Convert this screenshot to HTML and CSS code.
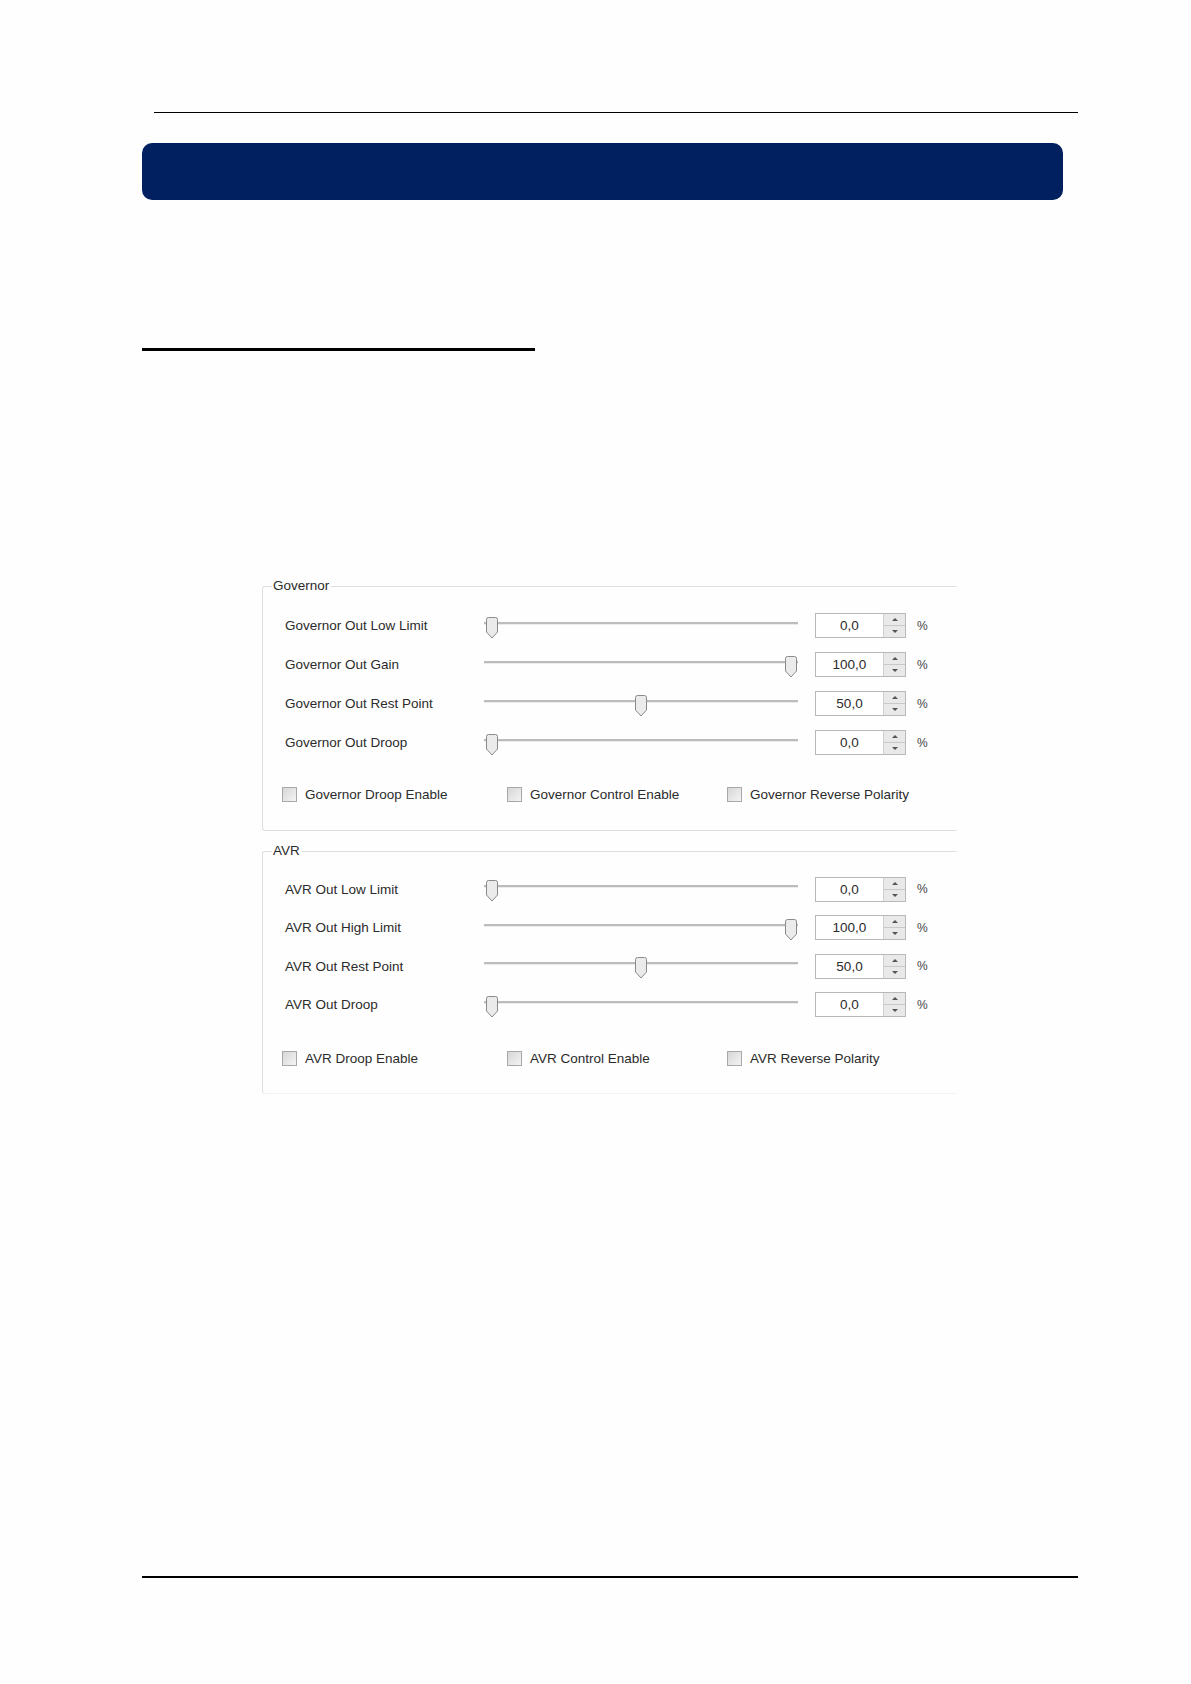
FILE: index.html
```html
<!DOCTYPE html>
<html>
<head>
<meta charset="utf-8">
<title>Governor / AVR</title>
<link rel="stylesheet" href="styles.css">
</head>
<body>
<div class="page">
  <div class="top-rule"></div>
  <div class="title-bar"></div>
  <div class="section-rule"></div>

  <div class="groups">
    <div class="group group-gov">
      <span class="legend">Governor</span>
      <div class="rows rows-gov">
        <div class="row">
          <span class="label">Governor Out Low Limit</span>
          <div class="slider"><div class="track"></div><svg class="thumb" style="left:1px" viewBox="0 0 14 22" width="14" height="22"><path d="M1.5 2.5 Q1.5 0.5 3.5 0.5 H10.5 Q12.5 0.5 12.5 2.5 V15 L7 21 L1.5 15 Z"/></svg></div>
          <div class="spin"><span class="val">0,0</span><span class="arrows"><span class="up"></span><span class="down"></span></span></div>
          <span class="pct">%</span>
        </div>
        <div class="row">
          <span class="label">Governor Out Gain</span>
          <div class="slider"><div class="track"></div><svg class="thumb" style="left:300px" viewBox="0 0 14 22" width="14" height="22"><path d="M1.5 2.5 Q1.5 0.5 3.5 0.5 H10.5 Q12.5 0.5 12.5 2.5 V15 L7 21 L1.5 15 Z"/></svg></div>
          <div class="spin"><span class="val">100,0</span><span class="arrows"><span class="up"></span><span class="down"></span></span></div>
          <span class="pct">%</span>
        </div>
        <div class="row">
          <span class="label">Governor Out Rest Point</span>
          <div class="slider"><div class="track"></div><svg class="thumb" style="left:150px" viewBox="0 0 14 22" width="14" height="22"><path d="M1.5 2.5 Q1.5 0.5 3.5 0.5 H10.5 Q12.5 0.5 12.5 2.5 V15 L7 21 L1.5 15 Z"/></svg></div>
          <div class="spin"><span class="val">50,0</span><span class="arrows"><span class="up"></span><span class="down"></span></span></div>
          <span class="pct">%</span>
        </div>
        <div class="row">
          <span class="label">Governor Out Droop</span>
          <div class="slider"><div class="track"></div><svg class="thumb" style="left:1px" viewBox="0 0 14 22" width="14" height="22"><path d="M1.5 2.5 Q1.5 0.5 3.5 0.5 H10.5 Q12.5 0.5 12.5 2.5 V15 L7 21 L1.5 15 Z"/></svg></div>
          <div class="spin"><span class="val">0,0</span><span class="arrows"><span class="up"></span><span class="down"></span></span></div>
          <span class="pct">%</span>
        </div>
      </div>
      <div class="checks checks-gov">
        <label class="check"><span class="box"></span>Governor Droop Enable</label>
        <label class="check"><span class="box"></span>Governor Control Enable</label>
        <label class="check"><span class="box"></span>Governor Reverse Polarity</label>
      </div>
    </div>

    <div class="group group-avr">
      <span class="legend">AVR</span>
      <div class="rows rows-avr">
        <div class="row">
          <span class="label">AVR Out Low Limit</span>
          <div class="slider"><div class="track"></div><svg class="thumb" style="left:1px" viewBox="0 0 14 22" width="14" height="22"><path d="M1.5 2.5 Q1.5 0.5 3.5 0.5 H10.5 Q12.5 0.5 12.5 2.5 V15 L7 21 L1.5 15 Z"/></svg></div>
          <div class="spin"><span class="val">0,0</span><span class="arrows"><span class="up"></span><span class="down"></span></span></div>
          <span class="pct">%</span>
        </div>
        <div class="row">
          <span class="label">AVR Out High Limit</span>
          <div class="slider"><div class="track"></div><svg class="thumb" style="left:300px" viewBox="0 0 14 22" width="14" height="22"><path d="M1.5 2.5 Q1.5 0.5 3.5 0.5 H10.5 Q12.5 0.5 12.5 2.5 V15 L7 21 L1.5 15 Z"/></svg></div>
          <div class="spin"><span class="val">100,0</span><span class="arrows"><span class="up"></span><span class="down"></span></span></div>
          <span class="pct">%</span>
        </div>
        <div class="row">
          <span class="label">AVR Out Rest Point</span>
          <div class="slider"><div class="track"></div><svg class="thumb" style="left:150px" viewBox="0 0 14 22" width="14" height="22"><path d="M1.5 2.5 Q1.5 0.5 3.5 0.5 H10.5 Q12.5 0.5 12.5 2.5 V15 L7 21 L1.5 15 Z"/></svg></div>
          <div class="spin"><span class="val">50,0</span><span class="arrows"><span class="up"></span><span class="down"></span></span></div>
          <span class="pct">%</span>
        </div>
        <div class="row">
          <span class="label">AVR Out Droop</span>
          <div class="slider"><div class="track"></div><svg class="thumb" style="left:1px" viewBox="0 0 14 22" width="14" height="22"><path d="M1.5 2.5 Q1.5 0.5 3.5 0.5 H10.5 Q12.5 0.5 12.5 2.5 V15 L7 21 L1.5 15 Z"/></svg></div>
          <div class="spin"><span class="val">0,0</span><span class="arrows"><span class="up"></span><span class="down"></span></span></div>
          <span class="pct">%</span>
        </div>
      </div>
      <div class="checks checks-avr">
        <label class="check"><span class="box"></span>AVR Droop Enable</label>
        <label class="check"><span class="box"></span>AVR Control Enable</label>
        <label class="check"><span class="box"></span>AVR Reverse Polarity</label>
      </div>
    </div>
  </div>

  <div class="bottom-rule"></div>
</div>
</body>
</html>
```

FILE: styles.css
```css
html, body {
  margin: 0;
  padding: 0;
  background: #fefefe;
}

.page {
  width: 1191px;
  height: 1684px;
  padding-top: 112px;
  box-sizing: border-box;
  font-family: "Liberation Sans", Arial, sans-serif;
  color: #2b2b2b;
}

.top-rule {
  margin-left: 154px;
  width: 924px;
  height: 1px;
  background: #000;
}

.title-bar {
  margin: 30px 0 0 142px;
  width: 921px;
  height: 57px;
  background: #002060;
  border-radius: 10px;
}

.section-rule {
  margin: 148px 0 0 142px;
  width: 393px;
  height: 3px;
  background: #000;
}

.groups {
  margin: 235px 0 0 262px;
  width: 695px;
}

.group {
  border: 1px solid #dedede;
  border-right-color: transparent;
  border-radius: 3px 0 0 3px;
}

.group-gov {
  padding-bottom: 26px;
}

.group-avr {
  margin-top: 20px;
  padding-bottom: 25px;
  border-bottom-color: #f2f2f2;
}

.legend {
  display: block;
  width: fit-content;
  margin: -9px 0 0 9px;
  padding: 0 2px 0 1px;
  background: #fefefe;
  font-size: 13.5px;
  line-height: 16px;
  color: #2b2b2b;
}

.rows-gov { margin-top: 12px; }
.rows-avr { margin-top: 11px; }

.row {
  display: flex;
  align-items: center;
  height: 39px;
  padding-left: 22px;
}

.rows-avr .row { height: 38.5px; }

.label {
  width: 199px;
  font-size: 13.5px;
  color: #2b2b2b;
  white-space: nowrap;
}

.slider {
  position: relative;
  width: 314px;
  height: 24px;
  margin-right: 17px;
}

.track {
  margin-top: 8px;
  height: 2px;
  background: #bcbcbc;
  border-bottom: 1px solid #ececec;
}

.thumb {
  position: absolute;
  top: 3px;
  display: block;
}

.thumb path {
  fill: #ebebeb;
  stroke: #8a8a8a;
  stroke-width: 1;
}

.spin {
  display: flex;
  width: 91px;
  height: 25px;
  box-sizing: border-box;
  border: 1px solid #b8b8b8;
  background: #fff;
}

.val {
  flex: 1;
  text-align: center;
  font-size: 13.5px;
  line-height: 23px;
  color: #2b2b2b;
}

.arrows {
  display: flex;
  flex-direction: column;
  width: 21px;
  border-left: 1px solid #d0d0d0;
  background: #e9e9e9;
}

.up, .down {
  flex: 1;
  display: flex;
  align-items: center;
  justify-content: center;
}

.up { border-bottom: 1px solid #c8c8c8; }

.up::before {
  content: "";
  border-left: 3.5px solid transparent;
  border-right: 3.5px solid transparent;
  border-bottom: 3.5px solid #555;
}

.down::before {
  content: "";
  border-left: 3.5px solid transparent;
  border-right: 3.5px solid transparent;
  border-top: 3.5px solid #555;
}

.pct {
  margin-left: 11px;
  font-size: 12px;
  color: #444;
}

.checks {
  display: grid;
  grid-template-columns: 225px 220px auto;
  padding-left: 19px;
  height: 20px;
  align-items: center;
}

.checks-gov { margin-top: 22px; }
.checks-avr { margin-top: 24px; }

.check {
  display: flex;
  align-items: center;
  gap: 8px;
  font-size: 13.5px;
  color: #2b2b2b;
  white-space: nowrap;
}

.box {
  width: 15px;
  height: 15px;
  box-sizing: border-box;
  border: 1px solid #a8a8a8;
  background: linear-gradient(135deg, #d6d6d6, #f4f4f4);
}

.bottom-rule {
  margin: 482px 0 0 142px;
  width: 936px;
  height: 2px;
  background: #000;
}
```
